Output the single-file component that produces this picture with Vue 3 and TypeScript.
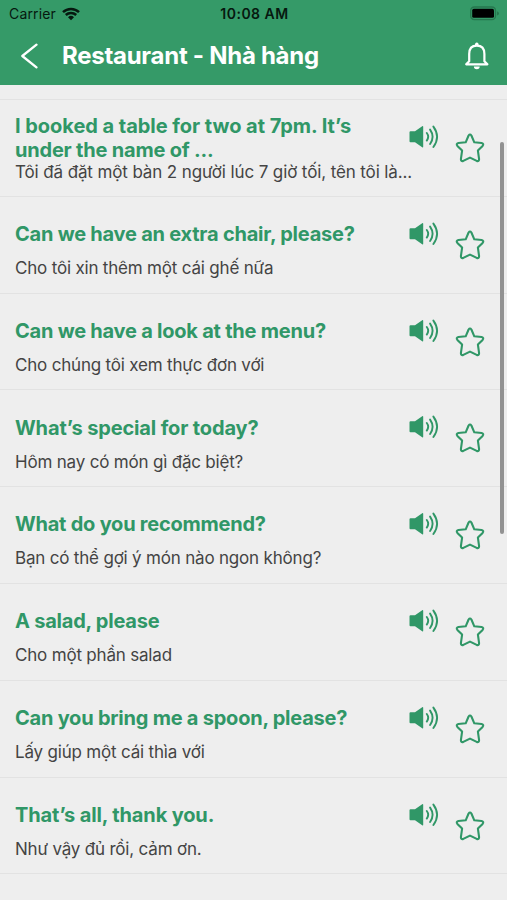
<script setup lang="ts">
interface Phrase {
  en: string[]
  vi: string
}

const phrases: Phrase[] = [
  { en: ['I booked a table for two at 7pm. It’s', 'under the name of ...'], vi: 'Tôi đã đặt một bàn 2 người lúc 7 giờ tối, tên tôi là...' },
  { en: ['Can we have an extra chair, please?'], vi: 'Cho tôi xin thêm một cái ghế nữa' },
  { en: ['Can we have a look at the menu?'], vi: 'Cho chúng tôi xem thực đơn với' },
  { en: ['What’s special for today?'], vi: 'Hôm nay có món gì đặc biệt?' },
  { en: ['What do you recommend?'], vi: 'Bạn có thể gợi ý món nào ngon không?' },
  { en: ['A salad, please'], vi: 'Cho một phần salad' },
  { en: ['Can you bring me a spoon, please?'], vi: 'Lấy giúp một cái thìa với' },
  { en: ['That’s all, thank you.'], vi: 'Như vậy đủ rồi, cảm ơn.' },
]
</script>

<template>
  <div class="screen">
    <header class="header">
      <div class="status">
        <div class="carrier">
          <span>Carrier</span>
          <svg width="18" height="14" viewBox="0 0 18 14">
            <path d="M1 5.2a11.5 11.5 0 0 1 16 0M3.8 8a7.5 7.5 0 0 1 10.4 0" fill="none" stroke="#06180f" stroke-width="2.5" />
            <path d="M9 13.2 6 10.2a4.3 4.3 0 0 1 6 0Z" fill="#06180f" />
          </svg>
        </div>
        <span class="time">10:08 AM</span>
        <div class="battery">
          <svg width="31" height="15" viewBox="0 0 31 15">
            <rect x="1.7" y="1" width="24.8" height="12.6" rx="3.6" fill="none" stroke="#26774e" stroke-width="1.3" />
            <rect x="3.2" y="2.8" width="21.8" height="9" rx="1.6" fill="#000" />
            <path d="M28 5.2q2 .8 2 2.2t-2 2.2Z" fill="#26774e" />
          </svg>
        </div>
      </div>
      <div class="nav">
        <svg class="back" width="18" height="26" viewBox="0 0 18 26">
          <path d="M16.5 1.7 2.3 13l14.2 11.3" fill="none" stroke="#fff" stroke-width="2.3" stroke-linecap="round" stroke-linejoin="round" />
        </svg>
        <h1 class="title">Restaurant - Nhà hàng</h1>
        <svg class="bell" width="24" height="28" viewBox="0 0 24 28">
          <path d="M1.2 22.3 4.2 19.3V12C4.2 7 6.7 3.7 11.8 3.7S19.4 7 19.4 12v7.3l3 3Z" fill="none" stroke="#fff" stroke-width="2.2" stroke-linejoin="round" />
          <path d="M9.9 3.4a1.9 2.9 0 0 1 3.8 0ZM8.9 24.6h5.8a2.9 2.7 0 0 1-5.8 0Z" fill="#fff" />
        </svg>
      </div>
    </header>

    <main class="list">
      <article v-for="(p, i) in phrases" :key="i" class="row" :class="{ tall: p.en.length > 1 }">
        <div class="text">
          <h2 class="en" :class="{ loose: p.en[0].includes('’') }">
            <span v-for="line in p.en" :key="line" class="line">{{ line }}</span>
          </h2>
          <p class="vi">{{ p.vi }}</p>
        </div>
        <svg class="speaker" width="30" height="24" viewBox="0 0 30 24">
          <path d="M1.5 6.2H6L13.2 1.2q1-.6 1 .5V21.8q0 1.1-1 .5L6 17.3H1.5q-1 0-1-1V7.2q0-1 1-1Z" fill="#309767" />
          <path d="M17.8 8q2.8 3.8 0 7.6M21.1 4.6q5 7.2 0 14.4M24.4 1.6q7.4 10.2 0 20.4" fill="none" stroke="#309767" stroke-width="1.9" stroke-linecap="round" />
        </svg>
        <svg class="star" width="30" height="30" viewBox="0 0 30 30">
          <path d="M13.6 2.5Q15 .5 16.4 2.5L19.3 9.3 26.6 10Q29.3 10.8 27.6 12.9L22.9 17.6 24.1 26.1Q24 28.7 21.7 27.9L15 24.6 8.3 27.9Q6 28.7 5.9 26.1L7.1 17.6 2.4 12.9Q.7 10.8 3.4 10L10.7 9.3Z" fill="none" stroke="#309767" stroke-width="2.1" stroke-linejoin="round" />
        </svg>
      </article>
    </main>
    <div class="scrollbar"></div>
  </div>
</template>

<style>
body {
  background: #eeeeee;
  overflow: hidden;
}
</style>

<style scoped>
.screen {
  position: relative;
  width: 507px;
  height: 900px;
  overflow: hidden;
  background: #eeeeee;
  font-family: Inter, "Liberation Sans", sans-serif;
}
.header {
  height: 85px;
  background: #359a68;
}
.status {
  display: grid;
  grid-template-columns: 1fr auto 1fr;
  align-items: center;
  height: 27px;
  padding: 0 7px 0 9px;
  color: #06180f;
  font-size: 14px;
}
.carrier {
  display: flex;
  align-items: center;
  gap: 6px;
  letter-spacing: 0.15px;
}
.time {
  font-weight: 600;
  letter-spacing: 0.5px;
}
.battery {
  display: flex;
  justify-content: flex-end;
}
.nav {
  display: flex;
  align-items: center;
  height: 58px;
  padding: 0 18px 0 20px;
}
.title {
  flex: 1;
  margin: 0 0 0 24px;
  color: #fff;
  font-size: 24px;
  font-weight: 700;
  line-height: 30px;
  letter-spacing: -0.27px;
  white-space: nowrap;
}
.list {
  margin-top: 14px;
  border-top: 1px solid #e2e2e2;
}
.row {
  display: flex;
  align-items: flex-start;
  box-sizing: border-box;
  height: 96.8px;
  padding: 0 22px 0 15px;
  border-bottom: 1px solid #e2e2e2;
}
.text {
  flex: 1;
  min-width: 0;
  padding-top: 25.3px;
  white-space: nowrap;
}
.en {
  margin: 0;
  color: #309767;
  font-size: 20px;
  font-weight: 700;
  line-height: 24px;
  letter-spacing: -0.23px;
}
.en.loose {
  letter-spacing: -0.14px;
}
.line {
  display: block;
}
.vi {
  margin: 11px 0 0;
  color: #444;
  font-size: 17px;
  line-height: 22px;
  letter-spacing: -0.19px;
}
.tall .text {
  padding-top: 13.5px;
}
.tall .line:first-child {
  letter-spacing: -0.04px;
}
.tall .line:last-child {
  letter-spacing: -0.2px;
}
.tall .vi {
  margin-top: -1px;
  letter-spacing: -0.12px;
}
.speaker {
  flex: none;
  margin: 25px 16px 0 0;
}
.star {
  flex: none;
  margin-top: 33px;
}
.scrollbar {
  position: absolute;
  top: 142px;
  right: 3px;
  width: 4px;
  height: 392px;
  border-radius: 2px;
  background: #929292;
}
</style>
